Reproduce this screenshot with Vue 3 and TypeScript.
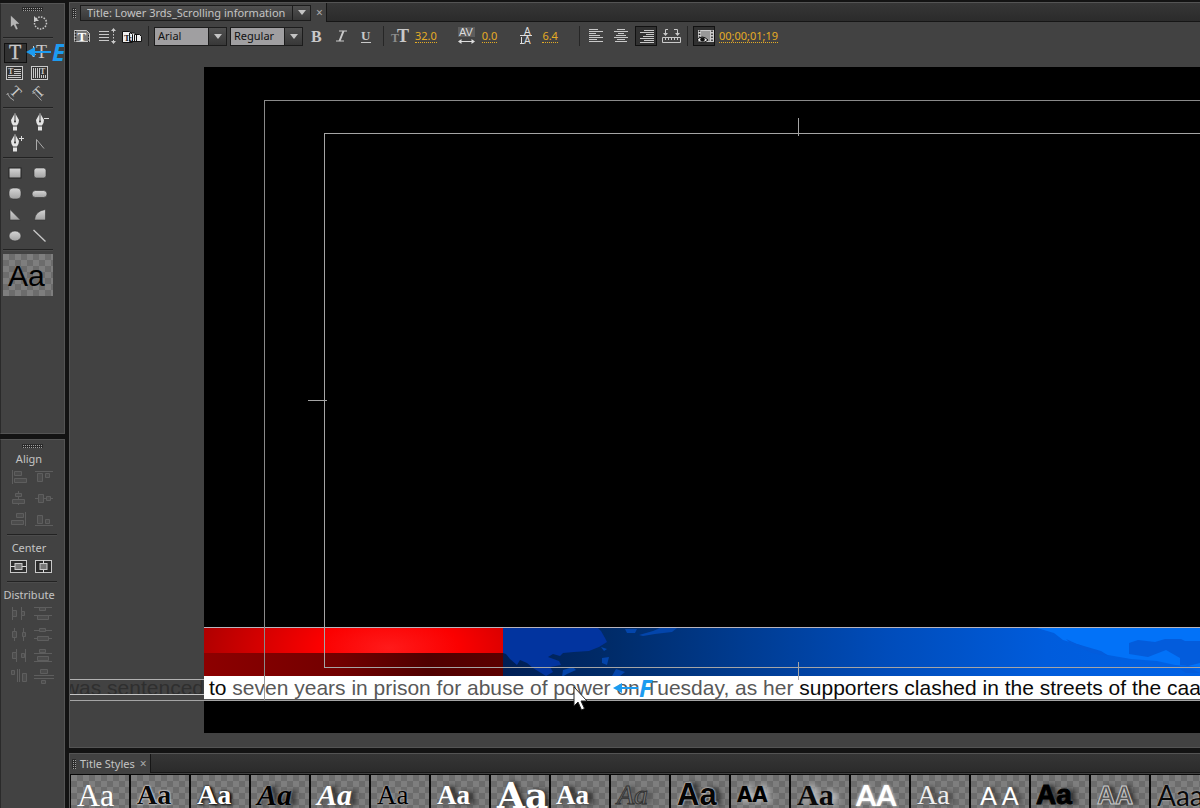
<script setup lang="ts">
import { ref } from 'vue'

interface Tool {
  name: string
  art: string
}

const light = '#c9c9c9'
const dim = '#5e5e5e'

const svgText = (x: number, y: number, size: number, t: string, extra = '') =>
  `<text x="${x}" y="${y}" font-size="${size}" font-family="Liberation Serif, serif" fill="${light}" ${extra}>${t}</text>`

const nib = `<path d="M11 1 L7 8 Q7 11 9 13.500 H13 Q15 11 15 8 Z M9 14.500 h4 v4 h-4z" fill="#e4e4e4"/><path d="M11 2 V9" stroke="#444" stroke-width="1"/><circle cx="11" cy="9.500" r="1" fill="#333"/>`

const toolGroups: Tool[][] = [
  [
    { name: 'Selection', art: `<path d="M6.500 3 V15.500 L9.500 13 L12 18 L14.200 17 L12 12.200 L16 12 Z" fill="#b5b5b5" stroke="#2a2a2a" stroke-width=".5"/>` },
    { name: 'Rotation', art: `<circle cx="11.500" cy="11" r="6" fill="none" stroke="${light}" stroke-width="1.500" stroke-dasharray="1.500 1.300"/><path d="M5 4 V9 H10 Z" fill="${light}"/>` },
  ],
  [
    { name: 'Type', art: svgText(5, 16, 20, 'T', 'stroke="#c9c9c9" stroke-width=".3"') },
    { name: 'Vertical type', art: svgText(7, 15, 18, 'T') + `<path d="M4.500 3 V13 M2.500 11 L4.500 14 L6.500 11" stroke="${light}" fill="none"/>` },
    { name: 'Area type', art: `<rect x="2.500" y="3.500" width="16" height="13" fill="#333" stroke="${light}"/>` + svgText(4, 11, 8, 'T', 'font-weight="bold"') + `<path d="M10 6.500 h7 M10 8.500 h7 M10 10.500 h7 M4 12.500 h13 M4 14.500 h13" stroke="${light}"/>` },
    { name: 'Vertical area type', art: `<rect x="2.500" y="3.500" width="16" height="13" fill="#333" stroke="${light}"/>` + svgText(11, 11, 8, 'T', 'font-weight="bold"') + `<path d="M4.500 5 v10 M6.500 5 v10 M8.500 5 v10 M12.500 12 v3 M14.500 12 v3 M16.500 12 v3 M10.500 5 v10" stroke="${light}"/>` },
    { name: 'Path type', art: `<g transform="rotate(45 10 14)">` + svgText(3, 14, 15, 'T') + `</g><path d="M3.500 10.500 Q5 15 10 17.500 M2.500 12 l2 -2" stroke="#aaa" fill="none"/>` },
    { name: 'Vertical path type', art: `<g transform="rotate(-45 12 14)">` + svgText(9, 14, 15, 'T') + `</g><path d="M5 9.500 L12.500 17.500 M3.500 10.500 l3 -1.500" stroke="#aaa" fill="none"/>` },
  ],
  [
    { name: 'Pen', art: nib },
    { name: 'Delete anchor point', art: nib + `<path d="M15 6.500 h5" stroke="#ddd"/>` },
    { name: 'Add anchor point', art: nib + `<path d="M15 5.500 h5 M17.500 3 v5" stroke="#ddd"/>` },
    { name: 'Convert anchor point', art: `<path d="M7.500 17 V6.500 L15 15.500" fill="none" stroke="#aaa" stroke-width="1"/>` },
  ],
  [
    { name: 'Rectangle', art: `<rect x="5" y="6" width="12" height="10" fill="url(#metal)" stroke="#222"/>` },
    { name: 'Rounded rectangle', art: `<rect x="5" y="6" width="12" height="10" rx="2.500" fill="url(#metal)" stroke="#333" stroke-width=".6"/>` },
    { name: 'Clipped rectangle', art: `<rect x="5" y="5" width="12" height="11" rx="4" fill="url(#metal)" stroke="#333" stroke-width=".6"/>` },
    { name: 'Rounded bar', art: `<rect x="3" y="7.500" width="15" height="7" rx="3.500" fill="url(#metal)" stroke="#333" stroke-width=".6"/>` },
    { name: 'Wedge', art: `<path d="M6 5.500 V16 H16.500 Z" fill="url(#metal)" stroke="#333" stroke-width=".6"/>` },
    { name: 'Arc', art: `<path d="M16.500 5.500 V16 H5.500 Q6 7 16.500 5.500 Z" fill="url(#metal)" stroke="#333" stroke-width=".6"/>` },
    { name: 'Ellipse', art: `<ellipse cx="11" cy="11" rx="6" ry="5" fill="url(#metal)" stroke="#333" stroke-width=".6"/>` },
    { name: 'Line', art: `<path d="M4.500 5 L16.500 16.500" stroke="${light}" stroke-width="1.300"/>` },
  ],
]

const g = (lines: string, boxes: string) =>
  `<path d="${lines}" stroke="${dim}" fill="none"/><path d="${boxes}" stroke="${dim}" fill="#4c4c4c"/>`

const alignTools: Tool[] = [
  { name: 'Align left', art: g('M5.500 3 V17', 'M7.500 4.500 h7 v4 h-7z M7.500 11.500 h12 v4 h-12z') },
  { name: 'Align top', art: g('M3 4.500 H21', 'M5.500 6.500 h5 v8 h-5z M13.500 6.500 h4 v4 h-4z') },
  { name: 'Align horizontal center', art: g('M11.500 3 V17', 'M8.500 5.500 h6 v3 h-6z M5.500 11.500 h12 v4 h-12z') },
  { name: 'Align vertical center', art: g('M3 10.500 H21', 'M6.500 6.500 h5 v8 h-5z M14.500 8.500 h4 v4 h-4z') },
  { name: 'Align right', art: g('M18.500 3 V17', 'M9.500 4.500 h7 v4 h-7z M4.500 11.500 h12 v4 h-12z') },
  { name: 'Align bottom', art: g('M3 16.500 H21', 'M5.500 6.500 h5 v8 h-5z M13.500 10.500 h4 v4 h-4z') },
]

const centerTools: Tool[] = [
  { name: 'Center vertically', art: `<rect x="3.500" y="4.500" width="16" height="12" fill="#2c2c2c" stroke="${light}"/><path d="M4 10.500 H19" stroke="#ddd"/><rect x="8" y="7.500" width="7" height="6" fill="#777" stroke="${light}"/>` },
  { name: 'Center horizontally', art: `<rect x="3.500" y="4.500" width="16" height="12" fill="#2c2c2c" stroke="${light}"/><path d="M11.500 4 V17" stroke="#ddd"/><rect x="8" y="7.500" width="7" height="6" fill="#777" stroke="${light}"/>` },
]

const distributeTools: Tool[] = [
  { name: 'Distribute left', art: g('M5.500 4 V17 M14.500 4 V17', 'M5.500 7.500 h4 v6 h-4z M14.500 8.500 h3 v4 h-3z') },
  { name: 'Distribute top', art: g('M2 4.500 H20 M2 12.500 H20', 'M7.500 4.500 h6 v3 h-6z M5.500 12.500 h11 v4 h-11z') },
  { name: 'Distribute horizontal center', art: g('M7.500 4 V17 M16.500 4 V17', 'M5.500 7.500 h4 v6 h-4z M15.500 8.500 h3 v4 h-3z') },
  { name: 'Distribute vertical center', art: g('M2 6.500 H20 M2 14.500 H20', 'M7.500 4.500 h6 v3 h-6z M5.500 12.500 h11 v4 h-11z') },
  { name: 'Distribute right', art: g('M9.500 4 V17 M18.500 4 V17', 'M5.500 7.500 h4 v6 h-4z M14.500 8.500 h3 v4 h-3z') },
  { name: 'Distribute bottom', art: g('M2 8.500 H20 M2 16.500 H20', 'M7.500 4.500 h6 v3 h-6z M5.500 11.500 h11 v4 h-11z') },
  { name: 'Space horizontally', art: g('M10.500 3 V16 M12.500 3 V16', 'M4.500 4.500 h3 v4 h-3z M15.500 7.500 h4 v8 h-4z') },
  { name: 'Space vertically', art: g('M2 9.500 H22 M2 12.500 H22', 'M8.500 3.500 h7 v4 h-7z M9.500 14.500 h4 v3 h-4z') },
]

const fileTools: Tool[] = [
  { name: 'New title based on current', art: `<path d="M3.500 4.500 h12 l3 3 v8 h-15z" fill="#777" stroke="${light}"/><path d="M4.500 5 v11" stroke="#222" stroke-dasharray="1.500 1.500" stroke-width="1.500"/><path d="M17.500 9 v7" stroke="#222" stroke-dasharray="1.500 1.500" stroke-width="1"/>` + svgText(6.5, 15, 13, 'T', 'font-weight="bold" style="fill:#fff"') },
  { name: 'Roll and crawl options', art: `<path d="M3 5.500 h10 M3 8.500 h10 M3 11.500 h10 M3 14.500 h10" stroke="${light}"/><path d="M17.500 5 v11" stroke="${light}" stroke-dasharray="1.500 1.500"/><path d="M15 5 L17.500 2 L20 5z M15 15 L17.500 18 L20 15z" fill="${light}"/>` },
  { name: 'Templates', art: `<path d="M13.500 8.500 h5 l2 2 v5 h-7z M8.500 7 h5 l2 2 v6.500 h-7z M1.500 5.500 h7 l3 3 v8 h-10z" fill="#eee" stroke="#111"/>` + `<text x="3" y="15" font-size="9" font-family="Liberation Serif, serif" font-weight="bold" fill="#222">T:</text>` },
]

const styleTools: Tool[] = [
  { name: 'Bold', art: svgText(5, 15.5, 16, 'B', 'font-weight="bold"') },
  { name: 'Italic', art: `<path d="M8 5 h8 M5 15 h8" stroke="${light}" stroke-width="1"/><path d="M12.500 5 L8.500 15" stroke="${light}" stroke-width="2"/>` },
  { name: 'Underline', art: svgText(5, 14, 13, 'U', 'font-weight="bold"') + `<path d="M5 16.500 h10" stroke="${light}"/>` },
]

const metrics = [
  { name: 'Font size', value: '32.0', art: svgText(8, 16, 18, 'T', 'font-weight="bold"') + svgText(2, 16, 12, 'T', 'style="fill:#8d8d8d" font-weight="bold"') },
  { name: 'Kerning', value: '0.0', art: `<rect x="2" y="1" width="17" height="10" fill="#5c5c5c"/><text x="3" y="10" font-size="11" font-family="Liberation Sans, sans-serif" fill="#ddd">AV</text><path d="M4 15.500 h13" stroke="#ddd"/><path d="M2 15.500 l3.500 -2.500 v5z M19 15.500 l-3.500 -2.500 v5z" fill="#ddd"/>` },
  { name: 'Leading', value: '6.4', art: `<text x="8" y="8.500" font-size="10" font-family="Liberation Sans, sans-serif" fill="#ddd">A</text><text x="8" y="17.500" font-size="10" font-family="Liberation Sans, sans-serif" fill="#ddd">A</text><path d="M4 9.500 h12 M5.500 11 v6 M4 17.500 h4" stroke="#ddd"/>` },
]

const alignText: Tool[] = [
  { name: 'Left', art: `<path d="M4 3.500 h9 M4 5.500 h14 M4 7.500 h7 M4 9.500 h11 M4 11.500 h14 M4 13.500 h8 M4 15.500 h14" stroke="${light}"/>` },
  { name: 'Center', art: `<path d="M7 3.500 h8 M4 5.500 h14 M8 7.500 h6 M6 9.500 h10 M4 11.500 h14 M7 13.500 h8 M5 15.500 h12" stroke="${light}"/>` },
  { name: 'Right', art: `<path d="M9 4.500 h10 M5 6.500 h14 M11 8.500 h8 M8 10.500 h11 M5 12.500 h14 M9 14.500 h10 M5 16.500 h14" stroke="${light}"/>` },
  { name: 'Tab stops', art: `<path d="M2.500 11.500 h18 v5 h-18z M5.500 12 v2 M8.500 12 v2 M11.500 12 v2 M14.500 12 v2 M17.500 12 v2" stroke="${light}" fill="none"/><path d="M8 3.500 H5.500 V8 M14 3.500 h3.500 V8" stroke="${light}" fill="none"/><path d="M3 7 h5 l-2.500 3z M15 7 h5 l-2.500 3z" fill="${light}"/>` },
]

const swatches = [
  'plain', 'slim-dark', 'slim-light', 'script-dark', 'script-light', 'serif-dark', 'serif-light',
  'slab', 'narrow-light', 'outline', 'deco', 'caps-dark', 'times-dark', 'caps-light', 'slim-light soft',
  'thin-caps', 'heavy', 'dotted', 'sans-dark',
]
const capsStyles = ['caps-dark', 'caps-light', 'dotted']
const sample = (s: string) => (capsStyles.includes(s) ? 'AA' : s === 'thin-caps' ? 'A A' : s === 'sans-dark' ? 'Aaa' : 'Aa')

const activeTool = ref('Type')
const justify = ref('Right')
const showVideo = ref(true)
</script>

<template>
  <main class="app">
    <svg class="defs" width="0" height="0" aria-hidden="true">
      <defs>
        <linearGradient id="metal" x1="0" y1="0" x2="0" y2="1">
          <stop offset="0" stop-color="#d6d6d6" />
          <stop offset="1" stop-color="#a2a2a2" />
        </linearGradient>
      </defs>
    </svg>

    <aside class="side">
      <section class="panel tools" aria-label="Title tools">
        <div class="grip"></div>
        <template v-for="(group, i) in toolGroups" :key="i">
          <div class="group" :class="{ tight: i === 1, first: i === 0 }">
            <button
              v-for="t in group" :key="t.name" type="button" class="tool"
              :class="{ on: activeTool === t.name }" :aria-label="t.name" @click="activeTool = t.name"
            >
              <svg viewBox="0 0 23 20" width="23" height="20" v-html="t.art"></svg>
            </button>
          </div>
          <hr class="rule">
        </template>
        <div class="preview checker">Aa</div>
        <div class="note note-e">
          <svg viewBox="0 0 26 10" width="26" height="10"><path d="M0 5 L9 0 V10 Z M8 4 H25 V6 H8 Z" fill="#1c9bf0" /></svg>
          <span>E</span>
        </div>
      </section>

      <section class="panel align">
        <div class="grip"></div>
        <h2>Align</h2>
        <div class="pairs">
          <button v-for="t in alignTools" :key="t.name" type="button" disabled :aria-label="t.name">
            <svg viewBox="0 0 23 21" width="23" height="21" v-html="t.art"></svg>
          </button>
        </div>
        <hr class="rule">
        <h2>Center</h2>
        <div class="pairs">
          <button v-for="t in centerTools" :key="t.name" type="button" :aria-label="t.name">
            <svg viewBox="0 0 23 21" width="23" height="21" v-html="t.art"></svg>
          </button>
        </div>
        <hr class="rule">
        <h2>Distribute</h2>
        <div class="pairs">
          <button v-for="t in distributeTools" :key="t.name" type="button" disabled :aria-label="t.name">
            <svg viewBox="0 0 23 21" width="23" height="21" v-html="t.art"></svg>
          </button>
        </div>
      </section>
    </aside>

    <div class="work">
      <section class="panel monitor">
        <header class="tabs">
          <div class="tab">
            <span class="vgrip"></span>
            <label class="drop title-drop">
              <select aria-label="Title"><option>Title: Lower 3rds_Scrolling information</option></select>
              <span class="arrow"></span>
            </label>
            <button type="button" class="close" aria-label="Close title">×</button>
          </div>
        </header>

        <div class="toolbar">
          <button v-for="t in fileTools" :key="t.name" type="button" class="icon" :aria-label="t.name">
            <svg viewBox="0 0 22 20" width="22" height="20" v-html="t.art"></svg>
          </button>
          <span class="sep"></span>
          <label class="drop font-drop">
            <select aria-label="Font family"><option>Arial</option></select>
            <span class="arrow"></span>
          </label>
          <label class="drop font-drop">
            <select aria-label="Font style"><option>Regular</option></select>
            <span class="arrow"></span>
          </label>
          <button v-for="t in styleTools" :key="t.name" type="button" class="icon" :aria-label="t.name">
            <svg viewBox="0 0 22 20" width="22" height="20" v-html="t.art"></svg>
          </button>
          <span class="sep"></span>
          <template v-for="m in metrics" :key="m.name">
            <svg class="glyph" viewBox="0 0 22 20" width="22" height="20" v-html="m.art"></svg>
            <button type="button" class="value" :aria-label="m.name"><span>{{ m.value }}</span></button>
          </template>
          <span class="sep"></span>
          <button
            v-for="t in alignText" :key="t.name" type="button" class="icon"
            :class="{ on: justify === t.name }" :aria-label="t.name" @click="justify = t.name"
          >
            <svg viewBox="0 0 22 20" width="22" height="20" v-html="t.art"></svg>
          </button>
          <span class="sep"></span>
          <button type="button" class="icon" :class="{ on: showVideo }" aria-label="Show background video" @click="showVideo = !showVideo">
            <svg viewBox="0 0 22 20" width="22" height="20">
              <path d="M5 4 h16 v12 h-16z" fill="#ccc" />
              <path d="M8 5 h9 v10 h-9z" fill="#999" />
              <path d="M6.500 4.500 v11 M19 4.500 v11" stroke="#222" stroke-width="1.500" stroke-dasharray="1.500 1.500" />
              <path d="M4 14 Q9 8 15 14 Q9 19 4 14z" fill="#eee" stroke="#111" />
              <circle cx="9.500" cy="13.500" r="2.300" fill="#111" />
            </svg>
          </button>
          <button type="button" class="value" aria-label="Background timecode"><span>00;00;01;19</span></button>
        </div>

        <div class="viewport">
          <div class="screen">
            <div class="lower-third">
              <div class="red"></div>
              <div class="blue">
                <svg class="map-west" viewBox="0 0 190 48" width="190" height="48" aria-hidden="true">
                  <path d="M0 0 H95 L98 3 L102 10 L104 14 L96 19 L86 23 L71 24 L60 25 L57 28 L50 26 L45 29 L56 33 L58 37 L47 39 L50 44 L43 48 L30 40 L24 35 L17 32 L14 37 L7 31 L3 26 L0 25 Z" fill="#02349f" />
                  <path d="M122 1 h12 l-2 4 h-8z M136 7 l14 -4 l7 -3 h17 l-5 4 l-17 2 l-12 2z M98 19 l6 2 l-3 2z M99 30 l7 -1 l-2 8 l-5 -2z M113 41 l9 3 l-5 4 h-8z M60 42 l10 -3 l3 3 l-9 4 l-5 3z" fill="#0345ab" />
                </svg>
                <svg class="map-east" viewBox="0 0 163 48" width="163" height="48" aria-hidden="true">
                  <path d="M0 0 H163 V39 L138 37 L120 33 L94 31 L65 26 L43 17 L26 12 L17 5 Z" fill="#0272f8" />
                  <path d="M29 11 l11 5 l24 7 l8 5 l-17 -3 l-21 -9z M92 15 l9 -3 l17 2 l10 -3 h16 l4 2 h15 v22 l-12 3 l-8 -1 v-7 l-14 -8 l-18 7 l-19 -3z M143 41 h12 l8 4 h-14z" fill="#035cdc" />
                </svg>
              </div>
            </div>
            <div class="stage">
              <div class="safe action"></div>
              <div class="safe titles"></div>
              <i class="tick top"></i>
              <i class="tick mid"></i>
            </div>
          </div>
          <div class="ticker">
            <div class="outside"><span>was sentenced</span></div>
            <p><b>to</b> seven years in prison for abuse of power on Tuesday, as her <b>supporters clashed in the streets of the caa</b></p>
          </div>
          <div class="stage front">
            <div class="post"></div>
            <i class="tick bottom"></i>
          </div>
          <div class="note note-f">
            <svg viewBox="0 0 26 10" width="26" height="10"><path d="M0 5 L9 0 V10 Z M8 4 H25 V6 H8 Z" fill="#1c9bf0" /></svg>
            <span>F</span>
          </div>
          <svg class="cursor" viewBox="0 0 15 25" width="15" height="25" aria-hidden="true">
            <path d="M1 1 V20 L5 16 L8.500 24 L11.500 22.500 L8 15 H14 Z" fill="#fff" stroke="#222" stroke-width="1" />
          </svg>
        </div>
      </section>

      <section class="panel styles">
        <header class="tabs">
          <div class="tab">
            <span class="vgrip"></span>
            <h2>Title Styles</h2>
            <button type="button" class="close" aria-label="Close styles">×</button>
          </div>
        </header>
        <div class="swatches">
          <button v-for="(s, i) in swatches" :key="i" type="button" class="swatch checker" :class="s">{{ sample(s) }}</button>
        </div>
      </section>
    </div>
  </main>
</template>

<style>
body {
  margin: 0;
  background: #131313;
}
</style>

<style scoped>
.app {
  display: flex;
  gap: 4px;
  height: 100vh;
  overflow: hidden;
  box-sizing: border-box;
  background: #131313;
  color: #c4c4c4;
  font: 11px/16px "Noto Sans", "Open Sans", sans-serif;
}
.app * { box-sizing: border-box; }
.defs { position: absolute; }
button {
  margin: 0;
  padding: 0;
  border: 0;
  background: none;
  color: inherit;
  font: inherit;
}
svg { display: block; }
h2 {
  margin: 0;
  font: inherit;
}
.panel {
  background: #424242;
  border: 1px solid #545454;
}

/* left column */
.side {
  flex: none;
  width: 65px;
  display: grid;
  grid-template-rows: 7fr 6fr;
  gap: 5px;
  padding-top: 3px;
}
.side .panel {
  position: relative;
  min-height: 0;
  overflow: hidden;
  border-left-color: #2a2a2a;
  padding: 3px 0 0 2px;
}
.side .align {
  border-bottom: 0;
  padding: 4px 6px 0 6px;
}
.grip {
  width: 21px;
  height: 4px;
  margin: 0 auto 1px 19px;
}
.grip, .vgrip {
  background:
    linear-gradient(90deg, #2a2a2a 1px, transparent 1px) 0 0 / 2px 2px,
    linear-gradient(#2a2a2a 1px, #a0a0a0 1px) 0 0 / 2px 2px;
}
.align .grip { margin: 0 0 3px 15px; }
.rule {
  width: 50px;
  height: 2px;
  margin: 4px 0 3px;
  border: 0;
  background: #222;
  border-bottom: 1px solid #4c4c4c;
}
.align .rule { margin: 4px 0; }
.group {
  display: grid;
  grid-template-columns: 23px 23px;
  gap: 1px 2px;
  padding-left: 1px;
}
.group.first { padding-bottom: 1px; }
.group.tight {
  row-gap: 0;
  padding-top: 1px;
}
.tool {
  width: 23px;
  height: 20px;
}
.tool.on, .icon.on {
  background: #313131;
  box-shadow: inset 0 0 0 1px #111;
}
.checker {
  background: repeating-conic-gradient(#6c6c6c 0 25%, #7e7e7e 0 50%) 0 0 / 12px 12px;
}
.preview {
  width: 50px;
  height: 42px;
  padding-left: 5px;
  color: #000;
  font: 30px/44px "Liberation Sans", sans-serif;
}
.align h2 {
  width: 56px;
  margin-left: -6px;
  text-align: center;
}
.pairs {
  display: grid;
  grid-template-columns: 25px 25px;
}
.pairs button {
  width: 25px;
  height: 21px;
}
.note {
  position: absolute;
  display: flex;
  align-items: center;
  color: #1c9bf0;
  font: italic bold 24px/24px "Open Sans", sans-serif;
}
.note-e {
  left: 25px;
  top: 36px;
}
.note-f {
  left: 543px;
  bottom: 47px;
}

/* right column */
.work {
  flex: 1;
  min-width: 0;
  display: flex;
  flex-direction: column;
  gap: 5px;
  padding-top: 2px;
}
.work .panel { border-right: 0; }
.monitor {
  flex: 1;
  min-height: 0;
  display: flex;
  flex-direction: column;
}
.tabs {
  display: flex;
  height: 19px;
  background: linear-gradient(#363636, #2b2b2b);
  border-bottom: 1px solid #161616;
}
.tab {
  display: flex;
  align-items: center;
  height: 19px;
  padding: 0 2px;
  background: #424242;
  border-right: 1px solid #161616;
}
.vgrip {
  width: 4px;
  height: 10px;
  margin-right: 4px;
}
.close {
  width: 9px;
  margin-left: 4px;
  color: #aaa;
  font-size: 12px;
  line-height: 16px;
}
.drop {
  display: flex;
  border: 1px solid #1c1c1c;
  background: linear-gradient(#505050, #383838);
}
.drop select {
  flex: 1;
  min-width: 0;
  margin: 0;
  padding: 0 0 0 3px;
  border: 0;
  border-radius: 0;
  appearance: none;
  background: #a09fa1;
  color: #111;
  font: 11px/16px "Noto Sans", "Open Sans", sans-serif;
}
.drop .arrow {
  width: 18px;
  border-left: 1px solid #1c1c1c;
  display: grid;
  place-items: center;
}
.drop .arrow::before {
  content: "";
  border: 4px solid transparent;
  border-top: 5px solid #c4c4c4;
  border-bottom: 0;
}
.title-drop {
  width: 231px;
  height: 16px;
}
.title-drop select {
  padding-left: 6px;
  background: transparent;
  color: #c4c4c4;
  line-height: 14px;
}
.font-drop {
  width: 73px;
  height: 19px;
}
.toolbar {
  flex: none;
  display: flex;
  align-items: center;
  gap: 3px;
  height: 28px;
  padding-left: 1px;
}
.icon, .glyph {
  flex: none;
  width: 22px;
  height: 20px;
}
.sep {
  width: 1px;
  height: 20px;
  margin: 0 2px;
  background: #262626;
}
.value {
  padding: 0 1px;
  margin-right: 15px;
  color: #e5ac25;
  font-size: 11px;
  line-height: 13px;
}
.value span {
  display: block;
  border-bottom: 1px dotted #e5ac25;
}
.viewport {
  position: relative;
  flex: 1;
  min-height: 0;
  overflow: hidden;
  padding: 17px 0 14px 134px;
}
.screen {
  position: relative;
  height: 100%;
  overflow: hidden;
  background: #000;
}
.stage {
  position: absolute;
  top: 0;
  left: 0;
  height: 100%;
  aspect-ratio: 1187 / 666;
}
.stage.front {
  inset: 17px auto 14px 134px;
  height: auto;
}
.safe {
  position: absolute;
  border: 1px solid #a5a5a5;
}
.action { inset: 33px 60px 32px 60px; border-color: #8a8a8a; }
.titles { inset: 66px 120px 65px 120px; }
.tick {
  position: absolute;
  background: #a5a5a5;
}
.tick.top, .tick.bottom {
  left: 50%;
  width: 1px;
  height: 18px;
}
.tick.top { top: 51px; }
.tick.bottom { bottom: 53px; }
.tick.mid {
  left: 104px;
  top: 50%;
  width: 19px;
  height: 1px;
}
.post {
  position: absolute;
  left: 60px;
  bottom: 32px;
  width: 1px;
  height: 26px;
  background: #999;
}
.lower-third {
  position: absolute;
  left: 0;
  right: 0;
  bottom: 57px;
  height: 49px;
  display: flex;
  border-top: 1px solid #b9b4bd;
}
.red {
  width: 299px;
  background:
    linear-gradient(90deg, #8d0000, #720000 45%, #500000 75%, #5c0000) 0 25px / 100% 24px no-repeat,
    radial-gradient(ellipse 200px 90px at 185px 20px, #ff1a1a, #fb0000 35%, #a80000);
}
.blue {
  flex: 1;
  display: flex;
  justify-content: space-between;
  background: linear-gradient(90deg, #001f55, #002c6a 16%, #003c92 35%, #004cba 55%, #005cdc 78%, #0062e6);
}
.ticker {
  position: absolute;
  left: 0;
  right: 0;
  bottom: 46px;
  height: 25px;
  display: flex;
  border-bottom: 1px solid #a5a5a5;
  font: 21px/24px "Liberation Sans", Arial, sans-serif;
  white-space: nowrap;
}
.outside {
  flex: none;
  display: flex;
  justify-content: flex-end;
  width: 134px;
  height: 16px;
  margin-top: 3px;
  overflow: hidden;
  line-height: 16px;
  color: #2f2f2f;
  border-top: 1px solid #b0b0b0;
  border-bottom: 1px solid #c4c4c4;
}
.ticker p {
  flex: 1;
  min-width: 0;
  margin: 0;
  padding-left: 5px;
  overflow: hidden;
  background: #fff;
  color: #585858;
  border-bottom: 1px solid #555;
}
.ticker b {
  font-weight: normal;
  color: #0a0a0a;
}
.cursor {
  position: absolute;
  left: 503px;
  bottom: 36px;
}

/* title styles */
.styles {
  flex: none;
  border-bottom: 0;
}
.swatches {
  display: flex;
  gap: 2px;
  height: 34px;
  margin-top: 1px;
  padding: 1px 0 0 1px;
  overflow: hidden;
  background: #080808;
}
.swatch {
  flex: none;
  width: 58px;
  height: 40px;
  padding: 0 0 0 6px;
  overflow: hidden;
  text-align: left;
  white-space: nowrap;
  font: 32px/40px "Liberation Serif", serif;
  color: #fff;
}
.slim-dark, .slim-light { font: bold 28px/40px "Liberation Serif", serif; }
.slim-dark { color: #0a0a0a; text-shadow: 0 0 2px #fff, 0 0 2px #fff; }
.slim-light { text-shadow: 0 0 2px #000, 2px 1px 3px #000; }
.script-dark, .script-light { font: italic bold 30px/40px "Liberation Serif", serif; }
.script-dark { color: #000; text-shadow: 0 0 2px #bbb, 5px 0 5px #222; }
.script-light { text-shadow: 5px 0 5px #222; }
.serif-dark { color: #000; font-size: 27px; text-shadow: 0 0 2px #ddd; }
.serif-light { font: bold 27px/40px "Liberation Serif", serif; text-shadow: 5px 0 5px #222; }
.slab { font: bold 36px/40px "DejaVu Serif", serif; text-shadow: 3px 0 5px #222; }
.narrow-light { font: bold 27px/40px "Liberation Serif", serif; padding-left: 5px; text-shadow: 5px 0 5px #222; }
.outline { font: italic 28px/40px "Liberation Serif", serif; color: #777; -webkit-text-stroke: 1px #333; text-shadow: 5px 0 5px #444; }
.deco { font: bold 31px/40px "Liberation Sans", sans-serif; color: #050505; text-shadow: 0 0 2px #ddd, 0 0 2px #ddd, 5px 0 5px #222; }
.caps-dark { font: bold 22px/40px "DejaVu Sans Condensed", sans-serif; color: #000; text-shadow: 3px 0 6px #ddd; }
.times-dark { font: bold 30px/40px "Liberation Serif", serif; color: #0a0a0a; text-shadow: 4px 0 6px #ddd; }
.caps-light { font: bold 29px/40px Lato, sans-serif; text-shadow: 0 0 3px #eee; padding-left: 5px; }
.soft { font-weight: normal; color: #eee; text-shadow: 4px 0 5px #333; }
.thin-caps { font: 25px/40px Lato, sans-serif; padding-left: 9px; text-shadow: 4px 0 4px #333; }
.heavy { font: bold 28px/40px "Liberation Sans", sans-serif; padding-left: 5px; color: #000; -webkit-text-stroke: 1px #000; text-shadow: 5px 0 5px #222; }
.dotted { font: bold 25px/40px "Liberation Sans", sans-serif; color: #555; -webkit-text-stroke: 1px #ccc; text-shadow: 4px 0 5px #222; }
.sans-dark { font: 28px/40px Lato, sans-serif; color: #0a0a0a; text-shadow: 0 0 2px #ccc; }
</style>
